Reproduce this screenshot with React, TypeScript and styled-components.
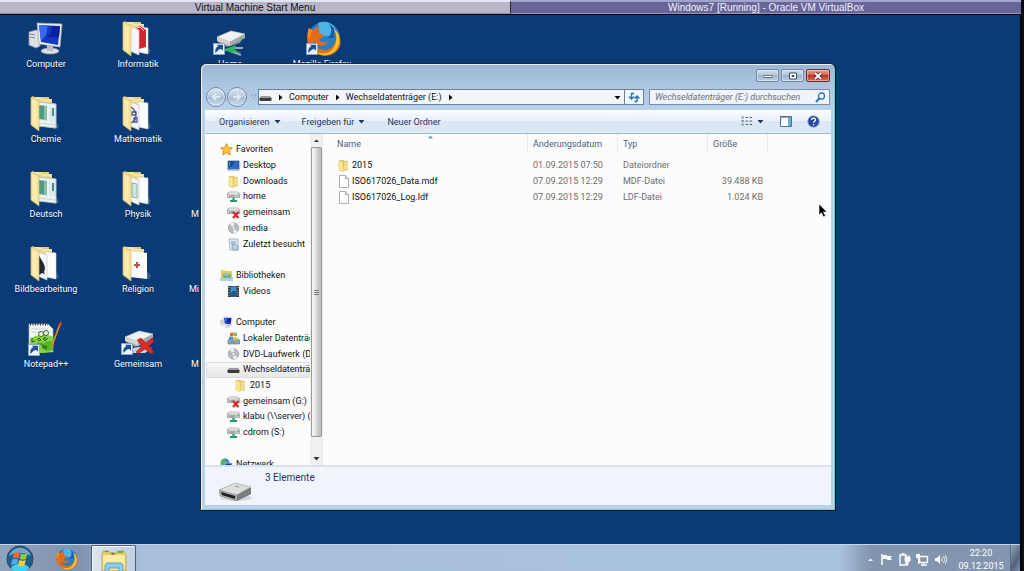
import React from "react";
import styled, { createGlobalStyle } from "styled-components";

const GlobalStyle = createGlobalStyle`
  *, *::before, *::after { box-sizing: border-box; }
  html, body { margin: 0; height: 100%; }
  #root { height: 100%; }
  body {
    background: #101014;
    font-family: Roboto, "Noto Sans", sans-serif;
    font-size: 9px;
    line-height: 12px;
    overflow: hidden;
  }
  button, input {
    font: inherit;
    color: inherit;
    margin: 0;
    padding: 0;
    border: 0;
    background: none;
    border-radius: 0;
  }
  ul { list-style: none; margin: 0; padding: 0; }
  svg { display: block; flex: none; }
`;

/* ---------- Host screen ---------- */

const Screen = styled.div`
  height: 100vh;
  display: flex;
  flex-direction: column;
`;

const HostTabs = styled.div`
  display: flex;
  flex: none;
  height: 15px;
  border-bottom: 1px solid #08080c;
  padding-right: 3px;
  background: #08080c;
  font-family: "Liberation Sans", Arial, sans-serif;
  font-size: 10px;
`;

const HostTab = styled.button<{ $active?: boolean }>`
  flex: 1;
  height: 14px;
  line-height: 11px;
  text-align: center;
  color: ${(p) => (p.$active ? "#f2f2fa" : "#101014")};
  background: ${(p) => (p.$active ? "#666699" : "#b6b6c8")};
  border-top: 2px solid ${(p) => (p.$active ? "#a4a4cc" : "#e4e4f2")};
  border-bottom: 1px solid ${(p) => (p.$active ? "#9494c0" : "#8c8ca4")};
  border-right: ${(p) => (p.$active ? "0" : "1px solid #24242e")};
`;

const Guest = styled.div`
  flex: 1;
  min-height: 0;
  display: flex;
  flex-direction: column;
  margin-right: 2px;
  border-right: 2px solid #020306;
`;

const Desktop = styled.main`
  flex: 1;
  min-height: 0;
  position: relative;
  overflow: hidden;
  background: #0a3b76;
`;

const ShortcutGrid = styled.div`
  display: grid;
  grid-auto-flow: column;
  grid-template-rows: repeat(5, 75px);
  grid-auto-columns: 92px;
  justify-content: start;
  padding-top: 5px;
`;

const Shortcut = styled.button`
  display: flex;
  flex-direction: column;
  align-items: center;
  justify-content: flex-start;
  color: #fff;
  text-shadow: 0 1px 1px #041a3c;
  white-space: nowrap;
`;

const ShortcutLabel = styled.span<{ $width?: number }>`
  text-align: left;
  width: ${(p) => (p.$width ? `${p.$width}px` : "auto")};
`;

/* ---------- Explorer window ---------- */

const Explorer = styled.section`
  position: absolute;
  left: 200px;
  top: 48px;
  width: 636px;
  height: 448px;
  display: flex;
  flex-direction: column;
  padding: 0 4px 5px;
  border: 1px solid #1c2c3e;
  border-right-color: #04080e;
  border-bottom-color: #04241e;
  border-radius: 6px 6px 0 0;
  background: linear-gradient(#9cb6d3, #aec7e2 24px, #bad1ea 46px, #b9d1ea);
  box-shadow: inset 1px 1px 0 #e4f0fa, inset -1px -1px 0 #6fcbe0;
`;

const Caption = styled.div`
  display: flex;
  justify-content: flex-end;
  gap: 2px;
  height: 23px;
  padding: 5px 1px 5px;
`;

const CaptionButton = styled.button<{ $close?: boolean }>`
  display: flex;
  align-items: center;
  justify-content: center;
  width: ${(p) => (p.$close ? "24px" : "23px")};
  height: 13px;
  border: 1px solid ${(p) => (p.$close ? "#6e2a2c" : "#71869f")};
  border-radius: 2px;
  background: ${(p) =>
    p.$close
      ? "linear-gradient(#dfa295, #cf6552 45%, #bb2e17 50%, #d6755c)"
      : "linear-gradient(#cfdeee, #b4c8de 45%, #9cb4cf 50%, #bdd0e5)"};
  box-shadow: inset 0 0 0 1px rgba(255, 255, 255, 0.4);
`;

const NavRow = styled.div`
  display: flex;
  align-items: center;
  height: 20px;
  padding: 0 1px;
`;

const HistoryButtons = styled.div`
  display: flex;
  align-items: center;
`;

const RoundButton = styled.button`
  display: grid;
  place-items: center;
  width: 20px;
  height: 20px;
  margin-right: 1px;
  border: 1px solid #7288a3;
  border-radius: 50%;
  background: linear-gradient(#d9e5f1, #b7cae0 50%, #a3bad4 52%, #cfdff0);
  box-shadow: inset 0 0 0 1px rgba(255, 255, 255, 0.5);
`;

const GlyphButton = styled.button`
  display: grid;
  place-items: center;
  height: 14px;
  min-width: 10px;
`;

const AddressBar = styled.nav`
  display: flex;
  align-items: center;
  flex: 1;
  height: 16px;
  margin-right: 5px;
  border: 1px solid #6c7f96;
  background: #f2f6fb;
  color: #101418;
`;

const Crumbs = styled.div`
  display: flex;
  flex: 1;
  align-items: center;
  gap: 5px;
`;

const RefreshButton = styled(GlyphButton)`
  width: 19px;
  margin-left: 2px;
  border-left: 1px solid #6c7f96;
`;

const SearchBox = styled.label`
  display: flex;
  align-items: center;
  width: 181px;
  height: 16px;
  padding: 0 3px 0 5px;
  border: 1px solid #7b8ea6;
  background: #eef4fa;
`;

const SearchInput = styled.input`
  flex: 1;
  min-width: 0;
  height: 14px;
  outline: 0;
  font-style: italic;
  &::placeholder { color: #6d7277; opacity: 1; }
`;

const Toolbar = styled.div`
  display: flex;
  align-items: center;
  flex: none;
  height: 24px;
  margin-top: 3px;
  padding: 0 11px 0 14px;
  border-bottom: 1px solid #a6b8d2;
  background: linear-gradient(#fbfdff, #eaf1fb 48%, #dce7f5 50%, #dde8f6);
  color: #1e395b;
`;

const ToolButton = styled.button<{ $gap?: number }>`
  display: flex;
  align-items: center;
  gap: 4px;
  height: 18px;
  margin-right: ${(p) => p.$gap ?? 0}px;
`;

const Spacer = styled.span`
  flex: 1;
`;

const Body = styled.div`
  display: flex;
  flex: 1;
  min-height: 0;
  background: #fcfcfc;
`;

const TreePane = styled.aside`
  width: 105px;
  overflow: hidden;
  padding-top: 8px;
`;

const Tree = styled.ul`
  display: grid;
  grid-template-rows: repeat(21, 1fr);
  height: 330px;
`;

const TreeItem = styled.li<{ $row: number; $level: number; $selected?: boolean }>`
  grid-row: ${(p) => p.$row};
  display: flex;
  align-items: center;
  gap: 3px;
  padding-left: ${(p) => 6 + p.$level * 7}px;
  margin-left: 1px;
  white-space: nowrap;
  color: #111;
  border: 1px solid ${(p) => (p.$selected ? "#dcdcdc" : "transparent")};
  border-right: 0;
  border-radius: 2px 0 0 2px;
  background: ${(p) => (p.$selected ? "linear-gradient(#f8f8f8, #e6e6e6)" : "none")};
`;

const TreeButton = styled.button`
  line-height: 13px;
`;

const ScrollTrack = styled.div`
  display: flex;
  flex-direction: column;
  width: 13px;
  flex: none;
  padding-left: 1px;
  background: #f0f0f0;
  border-right: 1px solid #e8ecf2;
`;

const ScrollThumb = styled.div`
  flex: 1;
  display: grid;
  place-items: center;
  width: 11px;
  border: 1px solid #9a9a9a;
  border-radius: 1px;
  background: linear-gradient(90deg, #f4f4f4, #e4e4e6 45%, #cfcfd3 55%, #bdbdc3);
`;

const ScrollArrow = styled.button<{ $end?: boolean }>`
  display: grid;
  place-items: center;
  width: 11px;
  height: ${(p) => (p.$end ? 28 : 13)}px;
  padding-top: ${(p) => (p.$end ? 14 : 0)}px;
`;

const ListPane = styled.div`
  flex: 1;
  min-width: 0;
`;

const FileTable = styled.table`
  width: 445px;
  table-layout: fixed;
  border-collapse: separate;
  border-spacing: 0;
  color: #6d6d6d;
  tbody::before { content: ""; display: block; height: 4px; }
`;

const HeadCell = styled.th`
  position: relative;
  height: 19px;
  padding: 0 0 0 5px;
  font-weight: 400;
  text-align: left;
  color: #4c607a;
  border-right: 1px solid #e3e9f2;
  &:first-child { padding-left: 14px; }
`;

const SortMark = styled.svg`
  position: absolute;
  top: 1px;
  left: 104px;
`;

const Cell = styled.td<{ $right?: boolean }>`
  height: 16px;
  padding: 0 5px;
  text-align: ${(p) => (p.$right ? "right" : "left")};
  white-space: nowrap;
  &:first-child { padding-left: 14px; color: #111; }
`;

const FileName = styled.button`
  display: flex;
  align-items: center;
  gap: 2px;
  line-height: 16px;
`;

const Details = styled.footer`
  display: flex;
  flex: none;
  gap: 12px;
  height: 40px;
  padding: 5px 0 0 13px;
  border-top: 2px solid #d6e3f3;
  background: #f1f5fb;
  color: #1e395b;
  font-size: 10px;
`;

const DriveHolder = styled.span`
  padding-top: 10px;
`;

const Pointer = styled.svg`
  position: absolute;
  left: 818px;
  top: 188px;
`;

/* ---------- Taskbar ---------- */

const Taskbar = styled.footer`
  display: flex;
  flex: none;
  height: 27px;
  border-top: 1px solid #c4d3e5;
  background: linear-gradient(
    90deg,
    #8fa3bd,
    #7f93ae 80px,
    #a7bfdc 140px,
    #a9c2de calc(100% - 180px),
    #8295ae calc(100% - 150px),
    #8396af
  );
  overflow: hidden;
`;

const StartButton = styled.button`
  width: 42px;
  padding-left: 6px;
`;

const TaskButton = styled.button<{ $active?: boolean }>`
  display: grid;
  justify-items: center;
  align-items: start;
  width: ${(p) => (p.$active ? 45 : 49)}px;
  padding-top: ${(p) => (p.$active ? 3 : 1)}px;
  border: 1px solid ${(p) => (p.$active ? "#4b6078" : "transparent")};
  border-bottom: 0;
  border-radius: 2px 2px 0 0;
  background: ${(p) =>
    p.$active ? "linear-gradient(100deg, #dfe7f0, #ccd9e8 50%, #bfd0e3)" : "none"};
  box-shadow: ${(p) => (p.$active ? "inset 1px 1px 0 #f2f6fa" : "none")};
`;

const Tray = styled.div`
  display: flex;
  align-items: center;
  gap: 5px;
  padding-top: 2px;
`;

const Clock = styled.time`
  width: 46px;
  margin: 2px 6px 0 11px;
  color: #fff;
  text-align: center;
  line-height: 13px;
`;

const ShowDesktop = styled.button`
  width: 10px;
  border-left: 1px solid #5b6d84;
  background: linear-gradient(120deg, #94a6bc, #52647b 60%, #7c8fa8);
`;

/* ---------- Icons ---------- */

const ShortcutArrow = () => (
  <g>
    <path d="M0.500 24.500h11v11h-11z" fill="#eef4fb" stroke="#8aa4c4" />
    <path d="M2.500 34c-.8-4 1-6.500 3-6.500l-1.500-1.800h6v6L8.300 30c-2 .2-3.600 1-5.800 4z" fill="#1c4f96" />
  </g>
);

type Art = "red" | "sheet" | "math" | "thin" | "bird" | "cross";

const FolderIcon = ({ art }: { art: Art }) => (
  <svg width="38" height="38" viewBox="3 0 38 38" aria-hidden="true">
    <path d="M8 1l3 1 14 0v28H11z" fill="#e6cc77" />
    <path d="M30 24l5 7-2 3-6-1z" fill="#5c7590" opacity=".6" />
    <path d="M8 2h8l2 2 10 0v27l-12-2z" fill="#ead893" />
    <path d="M11 3h6l2 2h8" stroke="#fbf1c4" fill="none" />
    {art === "cross" ? (
      <>
        <path d="M14 6l17 2v26l-17-2z" fill="#fdfdfd" />
        <path d="M20 17h2v2h2v2h-2v2h-2v-2h-2v-2h2z" fill="#b5563c" />
      </>
    ) : art === "sheet" ? (
      <>
        <path d="M14 7l18 2v24l-18-2z" fill="#eef3ef" stroke="#b6c4bd" />
        <path d="M14 10l9 1v14l-9-1z" fill="#4f9b7f" />
        <path d="M20 11l3 .5v14l-3-.5z" fill="#8cbfa9" />
        <path d="M25 12l6 1v14l-6-1z" fill="#dbe9f1" />
        <path d="M28 13h2v8h-2z" fill="#458d82" />
        <path d="M15 28l16 2" stroke="#cdd5d0" />
      </>
    ) : (
      <>
        <path d="M22 7l10 1v26l-10-2z" fill="#fcfcfc" stroke="#d2d4d8" strokeWidth=".6" />
        {art === "red" && (
          <>
            <path d="M17 9l7-3 6 4v17l-7 2z" fill="#d8232d" />
            <path d="M18 9l6-2 4 4" stroke="#fff" fill="none" />
          </>
        )}
        <path d="M14 7l9 3v25l-9-4z" fill="#f6f7f8" stroke="#c4c8ce" strokeWidth=".7" />
        {art === "math" && (
          <path d="M15 12c3 2 5 5 5 9s-2 5-5 7M16 17h4v3h-4zM18 23h3v4h-3z" stroke="#43538e" fill="none" strokeWidth="1.300" />
        )}
        {art === "thin" && <path d="M16 13l5 1v14l-5-1z" fill="#d4e4e3" stroke="#6f9f98" strokeWidth=".8" />}
        {art === "bird" && <path d="M14 8c2 6 7 10 7 16l-1 3 1 2-3-1-4 3z" fill="#23262d" />}
      </>
    )}
    <path d="M7 2l8 4v30l-8-6z" fill="#f6e39c" stroke="#d8bd66" strokeWidth=".7" />
    <path d="M8.500 5l4 2v25l-4-3z" fill="#faecb2" />
  </svg>
);

const ComputerIcon = ({ size = 38 }: { size?: number }) => (
  <svg width={size} height={size} viewBox="1 0 38 38" aria-hidden="true">
    <path d="M3 12l7-2 4 1v15l-4 2-7-3z" fill="#dde0e3" stroke="#8e959e" strokeWidth=".8" />
    <path d="M4 14l5 1M4 17l5 1" stroke="#7c858f" />
    <ellipse cx="24" cy="31" rx="9" ry="3" fill="#dfe3e8" stroke="#9aa3ad" strokeWidth=".7" />
    <path d="M21 24l6 1v6h-6z" fill="#b8c0ca" />
    <path d="M11 3l25 1-2 23-21-3z" fill="#eef1f4" stroke="#9ca7b4" strokeWidth=".8" />
    <path d="M13 5l21 1-2 19-17-3z" fill="#1438c4" />
    <path d="M13 5l8 .5c1 6-1 11-6 15z" fill="#3c69e8" />
    <path d="M26 6l8 .5-1 11c-4-1-9-1-13 1 4-3 6-8 6-12.500z" fill="#0b1fa0" />
  </svg>
);

const DriveArt = ({ broken }: { broken?: boolean }) => (
  <svg width="38" height="38" viewBox="0 0 38 38" aria-hidden="true">
    <path d="M6 17l14-6 14 3-5 9-13 4-9-5z" fill="#8d9196" />
    <path d="M6 17l14-6 14 3-15 8z" fill="#f1f2f2" stroke="#babdc0" strokeWidth=".6" />
    <path d="M6 17l13 5v4L6 21z" fill="#d2d3d3" />
    <path d="M19 22l15-8v4l-15 8z" fill="#a5a9ae" />
    {broken ? (
      <>
        <path d="M8 29l17-3 8 2-7 5H11z" fill="#ccd1d8" />
        <path d="M18 20l4-2 5 5 6-5 2 3-5 5 5 6-3 2-6-5-7 5-2-2 6-6z" fill="#dd2b2b" stroke="#9d1717" strokeWidth=".5" />
      </>
    ) : (
      <>
        <circle cx="30" cy="18" r="1" fill="#3fcc45" />
        <path d="M19 28h13M19 31l11 4" stroke="#98aabc" strokeWidth="2" />
        <path d="M11 30l9-3 5-2-1 5 6 3-11-1z" fill="#32b65b" />
      </>
    )}
    <g transform="translate(2 -1)"><ShortcutArrow /></g>
  </svg>
);

const FoxArt = () => (
  <g>
    <circle cx="20" cy="18" r="16" fill="#2a7fc0" />
    <path d="M14 3c8-3 14 0 17 5 0 8-9 10-16 7z" fill="#4db4e4" />
    <path d="M24 18c3-3 5-8 1-14l5 4v10z" fill="#1d5aa0" />
    <path d="M5 8c1 1 2 2 4 2 2-2 4-3 7-4-2 3-2 5-1 7l5 2c0 2-4 3-5 5 2 3 7 3 9 1-1 6-10 6-14 1 2 8 13 11 19 4 4-5 4-12 1-17 7 6 9 16 3 22C22 42 3 33 3 18 3 14 4 11 5 8z" fill="#e66b1a" />
    <path d="M30 9c7 5 7 15 2 21-5 6-14 7-20 2 8 3 15 1 18-5 3-5 3-12 0-18z" fill="#fbc330" />
    <path d="M5 8c1 1 2 2 4 2-3 3-3 6-3 10-2-3-3-8-1-12z" fill="#f59122" />
  </g>
);

const FirefoxIcon = ({ size = 38, shortcut }: { size?: number; shortcut?: boolean }) => (
  <svg width={size} height={size} viewBox={shortcut ? "-1 0 38 38" : "1 0 38 38"} aria-hidden="true">
    <FoxArt />
    {shortcut && <g transform="translate(2 -1)"><ShortcutArrow /></g>}
  </svg>
);

const NotepadIcon = () => (
  <svg width="38" height="38" viewBox="1 0 38 38" aria-hidden="true">
    <path d="M3 4h19l5 5v23H3z" fill="#f5f7f2" stroke="#abb3a6" strokeWidth=".7" />
    <path d="M4 4.500h18" stroke="#333" strokeDasharray="1 1.500" strokeWidth="2" />
    <path d="M5 9h17M5 12h20" stroke="#b5c4cf" strokeWidth=".7" />
    <path d="M4 19c4-4 18-6 23-2v14c-5 2-15 3-23 1z" fill="#84d442" />
    <path d="M15 24c5-2 9-4 12-3v9l-8 1z" fill="#57b52d" />
    <circle cx="15" cy="14" r="2.500" fill="#ecf6e0" stroke="#33412a" strokeWidth=".8" />
    <circle cx="20" cy="13" r="2.500" fill="#ecf6e0" stroke="#33412a" strokeWidth=".8" />
    <path d="M6 18v4l3-1M11 20l2-2 2 2-3 1M17 20l2-3v4l3-3M11 24h5M13 24v5M17 29v-4l3 4v-4" stroke="#225019" fill="none" strokeWidth=".9" />
    <path d="M34 4l-7 19-1 5" stroke="#e98e1d" strokeWidth="1.600" fill="none" />
    <path d="M35 2l-1 4" stroke="#d64634" strokeWidth="2" />
    <g transform="translate(2 0)"><ShortcutArrow /></g>
  </svg>
);

const BlankIcon = () => <svg width="38" height="38" aria-hidden="true" />;

const SmallIcon = ({ children }: { children: React.ReactNode }) => (
  <svg width="13" height="13" viewBox="0 0 13 13" aria-hidden="true">{children}</svg>
);

const SmallFolder = () => (
  <SmallIcon>
    <path d="M3 1h4l1 1h3v10H5z" fill="#dfc469" />
    <path d="M7 3h4v9H6z" fill="#f0dc90" />
    <path d="M2 1l4 2v10l-4-2z" fill="#fbe998" stroke="#d5b552" strokeWidth=".5" />
  </SmallIcon>
);
const SmallStar = () => (
  <SmallIcon>
    <path d="M6.500.5l1.800 4 4.200.4-3.200 2.800 1 4.300-3.800-2.300-3.800 2.300 1-4.300L.5 4.900l4.200-.4z" fill="#fbc23c" stroke="#d57f1a" strokeWidth=".8" />
  </SmallIcon>
);
const SmallDesktop = () => (
  <SmallIcon>
    <path d="M1 2h11v9H1z" fill="#2f6bc0" stroke="#203e70" strokeWidth=".6" />
    <path d="M1 2h6c0 4-2 6-6 6z" fill="#174a99" />
    <path d="M2 4h1M2 6h1" stroke="#cfe1f6" />
    <path d="M1 10.500h11" stroke="#8eb4df" />
  </SmallIcon>
);
const SmallNet = ({ broken }: { broken?: boolean }) => (
  <SmallIcon>
    <path d="M.5 3.500l2-1.500h8l2 1.500v4H.5z" fill="#c9cccf" stroke="#82878c" strokeWidth=".6" />
    <path d="M2 3h9" stroke="#f5f5f5" />
    <path d="M2 6h6" stroke="#73787d" strokeWidth=".8" />
    {broken ? (
      <path d="M6 6l5.500 6M11.500 6L6 12" stroke="#d3272b" strokeWidth="2.200" />
    ) : (
      <>
        <path d="M10 5h1.500v1H10z" fill="#36b94c" />
        <path d="M6.500 8v3M3 11h7" stroke="#299a70" strokeWidth="2.200" />
      </>
    )}
  </SmallIcon>
);
const SmallDisc = () => (
  <SmallIcon>
    <circle cx="6.500" cy="6" r="5.300" fill="#b9bdc1" stroke="#8d9196" strokeWidth=".6" />
    <path d="M6.500 6L3 2a5 5 0 014-1.200zM6.500 6l4 3.800a5 5 0 01-4 1.400z" fill="#f4f5f6" />
    <circle cx="6.500" cy="6" r="1.500" fill="#fff" stroke="#8d9196" strokeWidth=".6" />
  </SmallIcon>
);
const SmallRecent = () => (
  <SmallIcon>
    <path d="M2 1h9v11H3z" fill="#e5ecf1" stroke="#8b9dac" strokeWidth=".7" />
    <path d="M4 4h5M4 6h4" stroke="#748da3" />
    <path d="M5 8l3-2 3 2v4H6z" fill="#bdd3e4" stroke="#5f86a8" strokeWidth=".6" />
  </SmallIcon>
);
const SmallLibrary = () => (
  <SmallIcon>
    <path d="M1 1h4l1 1h6v10H1z" fill="#e8c95e" />
    <path d="M3 4h7v5H3z" fill="#8cc4d8" />
    <path d="M3 6l4 1 4-2v4H3z" fill="#7bb35d" />
    <path d="M0 8l3 1h6l4-1v4H0z" fill="#a9d3ea" />
    <path d="M2 1.500h3" stroke="#f7e7a2" />
  </SmallIcon>
);
const SmallVideo = () => (
  <SmallIcon>
    <path d="M1 1h11v11H1z" fill="#24323d" />
    <path d="M3.500 1.500h6v10h-6z" fill="#4198d0" />
    <path d="M4 8l3-3 2 2v4H4z" fill="#1c5892" />
    <path d="M2 2v10M11 2v10" stroke="#e4ebf0" strokeDasharray="1 1.500" />
  </SmallIcon>
);
const SmallSystem = () => (
  <SmallIcon>
    <path d="M1 8l2-1h8l1.500 1v4H1z" fill="#8fa8b7" stroke="#5b6d78" strokeWidth=".6" />
    <path d="M3 1l3.500-.5v3.500L3 4.500z" fill="#e8662c" />
    <path d="M7 .5l3 .5v3L7 4z" fill="#86b93c" />
    <path d="M2 5l4-.5V8H2z" fill="#4296d9" />
    <path d="M6.500 4.500l3 .5V8h-3z" fill="#f4c32c" />
    <path d="M3 10h6" stroke="#3ea0a0" />
  </SmallIcon>
);
const SmallRemovable = () => (
  <SmallIcon>
    <path d="M.5 7l2-2h8l2 2v2.500l-1 .5h-10l-1-.5z" fill="#3a3c3f" />
    <path d="M2.500 5h8l1.500 2H1z" fill="#9b9da0" />
  </SmallIcon>
);
const SmallNetwork = () => (
  <SmallIcon>
    <circle cx="5" cy="5" r="4.500" fill="#2b8cc8" />
    <path d="M2 2c3-1 4 0 4 2S3 6 2 8 0 5 2 2z" fill="#5cb748" />
    <path d="M5 5h7v6H5z" fill="#1a3dc0" stroke="#c8d2e0" strokeWidth=".8" />
    <path d="M7 12h4" stroke="#9aa4b2" />
  </SmallIcon>
);
const SmallFile = () => (
  <SmallIcon>
    <path d="M2.500.5h6l3 3v9h-9z" fill="#fdfdfd" stroke="#9b9b9b" strokeWidth=".8" />
    <path d="M8.500.5v3h3" fill="#e6e6e6" stroke="#9b9b9b" strokeWidth=".8" />
  </SmallIcon>
);

const caretPaths = {
  down: "M.5 2h6l-3 3.500z",
  right: "M2 .5v6l3.500-3z",
  up: "M1 5h5L3.500 2.500z",
};

const Caret = ({ dir = "down", color = "#1e395b" }: { dir?: keyof typeof caretPaths; color?: string }) => (
  <svg width="7" height="7" viewBox="0 0 7 7" aria-hidden="true">
    <path d={caretPaths[dir]} fill={color} />
  </svg>
);

const LargeDrive = () => (
  <svg width="35" height="20" viewBox="0 0 35 20" aria-hidden="true">
    <ellipse cx="18" cy="16" rx="16" ry="3" fill="#d3d8df" />
    <path d="M1 8L18 2l15 4v6l-15 7L2 14z" fill="#6c6e70" />
    <path d="M1 8L17 1l16 4-14 8z" fill="#dcdddd" stroke="#a4a5a6" strokeWidth=".7" />
    <path d="M1 8l18 5v6L2 14z" fill="#a6a7a8" />
    <path d="M3 10l14 4v3L4 13z" fill="#1d1e1f" />
    <path d="M19 13l14-7v6l-14 7z" fill="#7b7d7f" />
    <path d="M17 4l4 1" stroke="#8c8d8f" />
  </svg>
);

const StartOrb = () => (
  <svg width="28" height="28" viewBox="0 0 28 28" aria-hidden="true">
    <circle cx="14" cy="14" r="13" fill="#1d5f90" stroke="#28445f" />
    <path d="M3 11a11.500 11.500 0 0122 0c-5-4-17-4-22 0z" fill="#8cb8d2" opacity=".8" />
    <ellipse cx="14" cy="23" rx="9" ry="4" fill="#43d0ef" />
    <path d="M8 8c2-1 4-1 6 0l-1.500 5.500c-2-1-4-1-6 0z" fill="#ee6a32" />
    <path d="M15 8.500c2 1 4 1 6.500 0L20 14c-2 1-4 1-6.500 0z" fill="#95c83f" />
    <path d="M6.300 14.500c2-1 4-1 6 0L11 20c-2-1-4-1-6 0z" fill="#55a7e8" />
    <path d="M13.300 15c2 1 4 1 6.500 0l-1.500 5.500c-2 1-4 1-6.500 0z" fill="#fbcb3a" />
  </svg>
);

const ExplorerIcon = () => (
  <svg width="26" height="25" viewBox="0 0 26 25" aria-hidden="true">
    <path d="M1 5l1-3h6l1 2h7V2h7l1 3 1 1v16H1z" fill="#e8cb62" stroke="#b89537" strokeWidth=".6" />
    <path d="M4 2.500h3M10 4.500h4M17 3h5" stroke="#4aa04c" strokeWidth="1.500" />
    <path d="M11 5h2" stroke="#d4432e" strokeWidth="1.500" />
    <path d="M2 6h22v15H2z" fill="#fae99a" />
    <path d="M2 8h22M2 11h22" stroke="#fff4bd" />
    <path d="M4 25v-9l2-2h14l2 2v9h-4v-6H8v6z" fill="#8accec" stroke="#4793c0" strokeWidth=".8" />
  </svg>
);

/* ---------- Data ---------- */

const shortcuts: { label: string; icon: React.ReactNode; width?: number }[] = [
  { label: "Computer", icon: <ComputerIcon /> },
  { label: "Chemie", icon: <FolderIcon art="sheet" /> },
  { label: "Deutsch", icon: <FolderIcon art="sheet" /> },
  { label: "Bildbearbeitung", icon: <FolderIcon art="bird" /> },
  { label: "Notepad++", icon: <NotepadIcon /> },
  { label: "Informatik", icon: <FolderIcon art="red" /> },
  { label: "Mathematik", icon: <FolderIcon art="math" /> },
  { label: "Physik", icon: <FolderIcon art="thin" /> },
  { label: "Religion", icon: <FolderIcon art="cross" /> },
  { label: "Gemeinsam", icon: <DriveArt broken /> },
  { label: "Home", icon: <DriveArt /> },
  { label: "", icon: <BlankIcon /> },
  { label: "M", icon: <BlankIcon />, width: 78 },
  { label: "Mi", icon: <BlankIcon />, width: 82 },
  { label: "M", icon: <BlankIcon />, width: 78 },
  { label: "Mozilla Firefox", icon: <FirefoxIcon shortcut /> },
];

const treeItems: { row: number; level: number; label: string; icon: React.ReactNode; selected?: boolean }[] = [
  { row: 1, level: 1, label: "Favoriten", icon: <SmallStar /> },
  { row: 2, level: 2, label: "Desktop", icon: <SmallDesktop /> },
  { row: 3, level: 2, label: "Downloads", icon: <SmallFolder /> },
  { row: 4, level: 2, label: "home", icon: <SmallNet /> },
  { row: 5, level: 2, label: "gemeinsam", icon: <SmallNet broken /> },
  { row: 6, level: 2, label: "media", icon: <SmallDisc /> },
  { row: 7, level: 2, label: "Zuletzt besucht", icon: <SmallRecent /> },
  { row: 9, level: 1, label: "Bibliotheken", icon: <SmallLibrary /> },
  { row: 10, level: 2, label: "Videos", icon: <SmallVideo /> },
  { row: 12, level: 1, label: "Computer", icon: <ComputerIcon size={13} /> },
  { row: 13, level: 2, label: "Lokaler Datenträger", icon: <SmallSystem /> },
  { row: 14, level: 2, label: "DVD-Laufwerk (D:)", icon: <SmallDisc /> },
  { row: 15, level: 2, label: "Wechseldatenträger", icon: <SmallRemovable />, selected: true },
  { row: 16, level: 3, label: "2015", icon: <SmallFolder /> },
  { row: 17, level: 2, label: "gemeinsam (G:)", icon: <SmallNet broken /> },
  { row: 18, level: 2, label: "klabu (\\\\server) (", icon: <SmallNet /> },
  { row: 19, level: 2, label: "cdrom (S:)", icon: <SmallNet /> },
  { row: 21, level: 1, label: "Netzwerk", icon: <SmallNetwork /> },
];

const files = [
  { name: "2015", date: "01.09.2015 07:50", type: "Dateiordner", size: "", icon: <SmallFolder /> },
  { name: "ISO617026_Data.mdf", date: "07.09.2015 12:29", type: "MDF-Datei", size: "39.488 KB", icon: <SmallFile /> },
  { name: "ISO617026_Log.ldf", date: "07.09.2015 12:29", type: "LDF-Datei", size: "1.024 KB", icon: <SmallFile /> },
];

/* ---------- App ---------- */

export default function App() {
  return (
    <Screen>
      <GlobalStyle />
      <HostTabs>
        <HostTab>Virtual Machine Start Menu</HostTab>
        <HostTab $active>Windows7 [Running] - Oracle VM VirtualBox</HostTab>
      </HostTabs>
      <Guest>
        <Desktop>
          <ShortcutGrid>
            {shortcuts.map((s, i) => (
              <Shortcut key={i}>
                {s.icon}
                <ShortcutLabel $width={s.width}>{s.label}</ShortcutLabel>
              </Shortcut>
            ))}
          </ShortcutGrid>

          <Explorer>
            <Caption>
              <CaptionButton aria-label="Minimieren">
                <svg width="10" height="7"><path d="M1 3.500h8v2H1z" fill="#fff" stroke="#53657c" strokeWidth=".8" /></svg>
              </CaptionButton>
              <CaptionButton aria-label="Maximieren">
                <svg width="10" height="8"><path d="M1.500 1h7v6h-7z" fill="#fff" stroke="#3d4c60" /><path d="M4 3.500h2v1H4z" stroke="#3d4c60" fill="none" /></svg>
              </CaptionButton>
              <CaptionButton $close aria-label="Schließen">
                <svg width="10" height="8"><path d="M2 1l6 6M8 1L2 7" stroke="#5b2a2a" strokeWidth="3.400" /><path d="M2 1l6 6M8 1L2 7" stroke="#fff" strokeWidth="1.800" /></svg>
              </CaptionButton>
            </Caption>
            <NavRow>
              <HistoryButtons>
                <RoundButton aria-label="Zurück">
                  <svg width="12" height="10"><path d="M6 2L3 5l3 3M3 5h7" fill="none" stroke="#dfe9f4" strokeWidth="2" /></svg>
                </RoundButton>
                <RoundButton aria-label="Vorwärts">
                  <svg width="12" height="10"><path d="M6 2l3 3-3 3M9 5H2" fill="none" stroke="#dfe9f4" strokeWidth="2" /></svg>
                </RoundButton>
                <GlyphButton aria-label="Letzte Orte">
                  <svg width="7" height="6"><path d="M1 1h5L3.500 4.500z" fill="#dbe7f3" stroke="#8098b2" strokeWidth=".8" /></svg>
                </GlyphButton>
              </HistoryButtons>
              <AddressBar aria-label="Adresse">
                <Crumbs>
                  <SmallRemovable />
                  <Caret dir="right" color="#000" />
                  <button>Computer</button>
                  <Caret dir="right" color="#000" />
                  <button>Wechseldatenträger (E:)</button>
                  <Caret dir="right" color="#000" />
                </Crumbs>
                <GlyphButton aria-label="Vorherige Orte">
                  <Caret color="#000" />
                </GlyphButton>
                <RefreshButton aria-label="Aktualisieren">
                  <svg width="12" height="11"><path d="M6 1.500H3.500v5M1 4.500L3.500 7 6 4.500M6.500 9.500H9v-5M6.500 6.500L9 4l2.500 2.500" fill="none" stroke="#2d74b5" strokeWidth="1.400" /></svg>
                </RefreshButton>
              </AddressBar>
              <SearchBox>
                <SearchInput type="text" aria-label="Suchen" placeholder="Wechseldatenträger (E:) durchsuchen" />
                <svg width="11" height="11"><circle cx="6.500" cy="4" r="3" fill="#f8fbfe" stroke="#3470ac" strokeWidth="1.300" /><path d="M4.300 6.500L1 10" stroke="#3470ac" strokeWidth="2" /></svg>
              </SearchBox>
            </NavRow>
            <Toolbar>
              <ToolButton $gap={21}>Organisieren <Caret /></ToolButton>
              <ToolButton $gap={22}>Freigeben für <Caret /></ToolButton>
              <ToolButton>Neuer Ordner</ToolButton>
              <Spacer />
              <ToolButton $gap={16} aria-label="Ansicht ändern">
                <svg width="13" height="11"><path d="M1.500 1.500h2M1.500 5h2M1.500 8.500h2" stroke="#4c6078" strokeWidth="2" /><path d="M1.500 1.500h1M1.500 5h1M1.500 8.500h1" stroke="#fff" /><path d="M5.500 1.500H8M9.500 1.500H12M5.500 5H8M9.500 5H12M5.500 8.500H8M9.500 8.500H12" stroke="#4c6078" /></svg>
                <Caret />
              </ToolButton>
              <ToolButton $gap={15} aria-label="Vorschaufenster">
                <svg width="12" height="11"><path d="M.5.5h11v10H.5z" fill="#fbfdfe" stroke="#51708f" /><path d="M8 2h3v8H8z" fill="#62b3d3" /><path d="M1 1.500h10" stroke="#86a2bd" /></svg>
              </ToolButton>
              <ToolButton aria-label="Hilfe">
                <svg width="13" height="13"><circle cx="6.500" cy="6.500" r="5.700" fill="#2347a3" stroke="#8e9fc4" /><path d="M4.600 5c0-2.600 3.900-2.400 3.900 0 0 1.300-1.900 1.400-1.900 2.800M6.600 9v1.300" fill="none" stroke="#fff" strokeWidth="1.300" /></svg>
              </ToolButton>
            </Toolbar>
            <Body>
              <TreePane>
                <Tree>
                  {treeItems.map((t) => (
                    <TreeItem key={t.row} $row={t.row} $level={t.level} $selected={t.selected}>
                      {t.icon}
                      <TreeButton>{t.label}</TreeButton>
                    </TreeItem>
                  ))}
                </Tree>
              </TreePane>
              <ScrollTrack>
                <ScrollArrow aria-label="Nach oben"><Caret dir="up" color="#333" /></ScrollArrow>
                <ScrollThumb>
                  <svg width="5" height="7"><path d="M0 1.500h5M0 3.500h5M0 5.500h5" stroke="#777" /></svg>
                </ScrollThumb>
                <ScrollArrow $end aria-label="Nach unten"><Caret color="#333" /></ScrollArrow>
              </ScrollTrack>
              <ListPane>
                <FileTable>
                  <colgroup>
                    <col width="205" />
                    <col width="90" />
                    <col width="90" />
                    <col width="60" />
                  </colgroup>
                  <thead>
                    <tr>
                      <HeadCell>
                        Name
                        <SortMark width="7" height="4" aria-hidden="true">
                          <path d="M1 3.500h5L3.500.5z" fill="#5aa0c4" />
                        </SortMark>
                      </HeadCell>
                      <HeadCell>Änderungsdatum</HeadCell>
                      <HeadCell>Typ</HeadCell>
                      <HeadCell>Größe</HeadCell>
                    </tr>
                  </thead>
                  <tbody>
                    {files.map((f) => (
                      <tr key={f.name}>
                        <Cell><FileName>{f.icon}{f.name}</FileName></Cell>
                        <Cell>{f.date}</Cell>
                        <Cell>{f.type}</Cell>
                        <Cell $right>{f.size}</Cell>
                      </tr>
                    ))}
                  </tbody>
                </FileTable>
              </ListPane>
            </Body>
            <Details>
              <DriveHolder><LargeDrive /></DriveHolder>
              3 Elemente
            </Details>
          </Explorer>
          <Pointer width="12" height="16" viewBox="0 0 12 16" aria-hidden="true">
            <path d="M1 1v11l2.500-2.200L5.500 14l2-1-2-4H9z" fill="#000" stroke="#fff" strokeWidth=".6" />
          </Pointer>
        </Desktop>

        <Taskbar>
          <StartButton aria-label="Start"><StartOrb /></StartButton>
          <TaskButton aria-label="Mozilla Firefox"><FirefoxIcon size={24} /></TaskButton>
          <TaskButton $active aria-label="Explorer"><ExplorerIcon /></TaskButton>
          <Spacer />
          <Tray>
            <GlyphButton aria-label="Ausgeblendete Symbole"><Caret dir="up" color="#f0f4f8" /></GlyphButton>
            <svg width="13" height="13"><path d="M2 1v11" stroke="#fff" strokeWidth="1.500" /><path d="M3 2h4v1h5l-1.500 2L12 7H7V6H3z" fill="#fff" /></svg>
            <svg width="13" height="13"><path d="M2 2h6v10H2z" fill="none" stroke="#fff" strokeWidth="1.400" /><path d="M4 0h2v2H4zM7 4h5v4l-2 1v3H9V9L7 8zM8 2v2M11 2v2" fill="#fff" stroke="#fff" strokeWidth=".8" /></svg>
            <svg width="13" height="13"><path d="M3.500 3.500h8v6h-8zM5 12h6M7.500 10v2" fill="none" stroke="#fff" strokeWidth="1.300" /><path d="M0 1h4v4H3v6H2V5H0z" fill="#fff" /></svg>
            <svg width="13" height="13"><path d="M1 5h2l3-3v9L3 8H1z" fill="#fff" /><path d="M7.500 4.500q1.500 2 0 4M9.500 3q2.500 3.500 0 7M11.500 2q2.500 4.500 0 9" fill="none" stroke="#fff" strokeWidth=".8" /></svg>
          </Tray>
          <Clock>22:20<br />09.12.2015</Clock>
          <ShowDesktop aria-label="Desktop anzeigen" />
        </Taskbar>
      </Guest>
    </Screen>
  );
}
